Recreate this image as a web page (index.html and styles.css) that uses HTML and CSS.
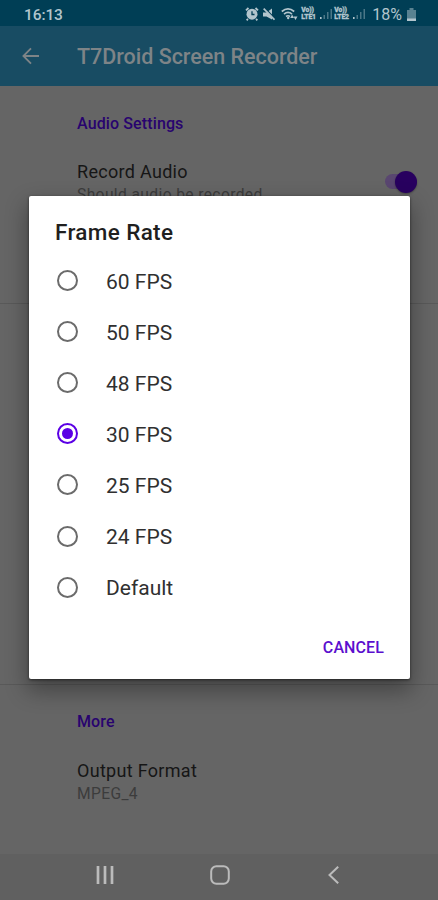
FILE: index.html
```html
<!DOCTYPE html>
<html lang="en">
<head>
<meta charset="utf-8">
<title>T7Droid Screen Recorder</title>
<link rel="stylesheet" href="styles.css">
</head>
<body>
<div class="screen">
  <header class="status">
    <span class="time">16:13</span>
    <div class="indicators">
      <svg class="alarm" width="14" height="14" viewBox="0 0 14 14"><path d="M1 3.4 3.5 1M13 3.4 10.5 1M3 12l-1.4 1.2M11 12l1.4 1.2" stroke="currentColor" stroke-width="1.8"/><circle cx="7" cy="7.2" r="5.5" fill="currentColor"/><path d="M7 4.2v3.3h2.5" fill="none" stroke="#043e55" stroke-width="1.3"/></svg>
      <svg class="mute" width="12" height="14" viewBox="0 0 12 14"><path d="M0 5.500h3.500L9 1.500v11l-5.500-3H0z" fill="currentColor"/><path d="m1.500.8 10 10.200" stroke="#043e55" stroke-width="1.300"/><path d="m.7 1.700 10.800 11" stroke="currentColor" stroke-width="1.700"/></svg>
      <svg class="wifi" width="17" height="14" viewBox="0 0 17 14"><g fill="none" stroke="currentColor" stroke-width="1.7"><path d="M.8 4.5Q7 -.8 13.2 4.5M3 7.1Q7 3.8 11 7.1M5 9.5Q7 8 9 9.5"/></g><circle cx="7.200" cy="11" r="1.200" fill="currentColor"/><path d="m9.200 11 1.900-3.500L13 11zM12.500 9.500h4l-2 3.500z" fill="currentColor"/></svg>
      <span class="lte"><b>Vo))</b><b>LTE1</b></span>
      <svg class="signal" width="14" height="12" viewBox="0 0 14 12"><path d="M1 9h1.6v2H1z" fill="currentColor"/><path d="M4.500 7H6v4H4.500zM8 4h1.500v7H8zM11.500 1H13v10h-1.500z" fill="currentColor" opacity=".42"/></svg>
      <span class="lte second"><b>Vo))</b><b>LTE2</b></span>
      <svg class="signal" width="14" height="12" viewBox="0 0 14 12"><path d="M1 9h1.600v2H1z" fill="currentColor"/><path d="M4.500 7H6v4H4.500zM8 4h1.500v7H8zM11.500 1H13v10h-1.500z" fill="currentColor" opacity=".42"/></svg>
      <span class="percent">18%</span>
      <svg class="battery" width="9" height="13" viewBox="0 0 9 13"><path d="M0 2h2.500V0h4v2H9v11H0z" fill="currentColor" opacity=".5"/><path d="M0 10.500h9V13H0z" fill="currentColor"/></svg>
    </div>
  </header>
  <div class="appbar">
    <svg width="18" height="18" viewBox="0 0 18 18"><path d="M17 9H1.500M9 1.300 1.400 9 9 16.700" fill="none" stroke="currentColor" stroke-width="1.800"/></svg>
    <h1>T7Droid Screen Recorder</h1>
  </div>
  <main class="settings">
    <section class="audio">
      <h2>Audio Settings</h2>
      <div class="preference">
        <div><p class="name">Record Audio</p><p class="summary">Should audio be recorded</p></div>
        <div class="switch"><i></i></div>
      </div>
    </section>
    <section class="middle"></section>
    <section class="more">
      <h2>More</h2>
      <p class="name">Output Format</p>
      <p class="summary">MPEG_4</p>
    </section>
  </main>
  <nav class="navigation">
    <svg width="18" height="18" viewBox="0 0 18 18"><path d="M2 0v18M9 0v18M16 0v18" stroke="currentColor" stroke-width="2.700"/></svg>
    <svg width="20" height="20" viewBox="0 0 20 20"><rect x="1.200" y="1.200" width="17.600" height="17.600" rx="5.200" fill="none" stroke="currentColor" stroke-width="2"/></svg>
    <svg width="11" height="18" viewBox="0 0 11 18"><path d="M10.200.7 1.500 9l8.700 8.300" fill="none" stroke="currentColor" stroke-width="2"/></svg>
  </nav>
</div>
<div class="dialog" role="dialog">
  <h2>Frame Rate</h2>
  <ul>
    <li><i class="radio"></i><span>60 FPS</span></li>
    <li><i class="radio"></i><span>50 FPS</span></li>
    <li><i class="radio"></i><span>48 FPS</span></li>
    <li><i class="radio checked"></i><span>30 FPS</span></li>
    <li><i class="radio"></i><span>25 FPS</span></li>
    <li><i class="radio"></i><span>24 FPS</span></li>
    <li><i class="radio"></i><span>Default</span></li>
  </ul>
  <div class="actions"><span>CANCEL</span></div>
</div>
</body>
</html>
```
FILE: styles.css
```css
* { box-sizing: border-box; margin: 0; padding: 0; }
body { width: 438px; height: 900px; overflow: hidden; font-family: Roboto, sans-serif; background: #656565; position: relative; }
.screen { height: 900px; display: flex; flex-direction: column; }
.status { height: 26px; flex: none; background: #003e55; color: #b2c5cd; display: flex; justify-content: space-between; padding: 2px 22px 0 24px; align-items: center; }
.time { font-size: 15.5px; font-weight: 500; letter-spacing: -.1px; padding-top: 1px; }
.indicators { display: flex; align-items: center; }
.alarm { margin-right: 4px; }
.mute { margin-right: 6px; }
.wifi { margin-right: 3px; }
.lte { width: 17px; display: flex; flex-direction: column; font-size: 6.8px; letter-spacing: -.1px; white-space: nowrap; -webkit-text-stroke: .3px currentColor; }
.lte b { font-weight: 900; line-height: 7px; height: 6.500px; }
.lte b { height: 7px; }
.signal { margin-left: 1px; }
.second { margin-left: 1px; }
.percent { font-size: 16px; margin-left: 6px; }
.battery { margin-left: 5px; }
.appbar { height: 60px; flex: none; background: #184c63; color: #7e8487; display: flex; align-items: center; padding-left: 22px; }
.appbar h1 { font-size: 21.5px; font-weight: 500; margin-left: 37px; letter-spacing: -.02px; padding-top: 1px; white-space: nowrap; }
.settings { flex: 1; }
.settings h2 { font-size: 16px; line-height: 20px; font-weight: 500; color: #28036f; letter-spacing: .12px; }
.audio { height: 218px; padding: 28px 21px 0 77px; border-bottom: 1px solid #595959; }
.preference { display: flex; justify-content: space-between; margin-top: 26px; }
.name { font-size: 18px; line-height: 24px; color: #161616; letter-spacing: .3px; white-space: nowrap; }
.summary { font-size: 15.6px; line-height: 22px; color: #3c3c3c; letter-spacing: .38px; white-space: nowrap; }
.switch { width: 32px; height: 15px; margin-top: 14px; border-radius: 8px; background: #594670; display: flex; align-items: center; justify-content: flex-end; }
.switch i { width: 22px; height: 22px; border-radius: 50%; background: #28005f; flex: none; box-shadow: 0 1px 2px #0005; }
.middle { height: 381px; border-bottom: 1px solid #595959; }
.more { padding: 27px 0 0 77px; }
.more h2 { margin-bottom: 27px; }
.navigation { height: 46px; flex: none; background: #606060; color: #bbb; display: flex; align-items: center; padding: 0 0 4px 96px; }
.navigation svg:nth-child(2) { margin-left: 96px; }
.navigation svg:nth-child(3) { margin-left: 98px; }
.dialog { position: absolute; left: 29px; top: 196px; width: 381px; height: 483px; background: #fff; border-radius: 2px; padding: 22px 26px 0; box-shadow: 0 10px 22px 2px #0005, 0 1px 3px #0008; color: #1f1f1f; }
.dialog h2 { font-size: 22.5px; line-height: 28px; font-weight: 500; letter-spacing: .35px; }
.dialog ul { list-style: none; margin-top: 9px; }
.dialog li { display: flex; align-items: center; height: 51.1px; font-size: 21px; padding-left: 2px; color: #303030; }
.dialog li span { margin-left: 28px; padding-top: 2px; white-space: nowrap; }
.radio { width: 21px; height: 21px; border: 2px solid #6b6b6b; border-radius: 50%; display: flex; align-items: center; justify-content: center; }
.checked { border-color: #5b00e5; }
.checked::after { content: ""; width: 11px; height: 11px; border-radius: 50%; background: #5b00e5; }
.actions { display: flex; justify-content: flex-end; margin-top: 25px; }
.actions span { font-size: 16px; line-height: 20px; font-weight: 500; color: #5b0fce; letter-spacing: .1px; }
```
